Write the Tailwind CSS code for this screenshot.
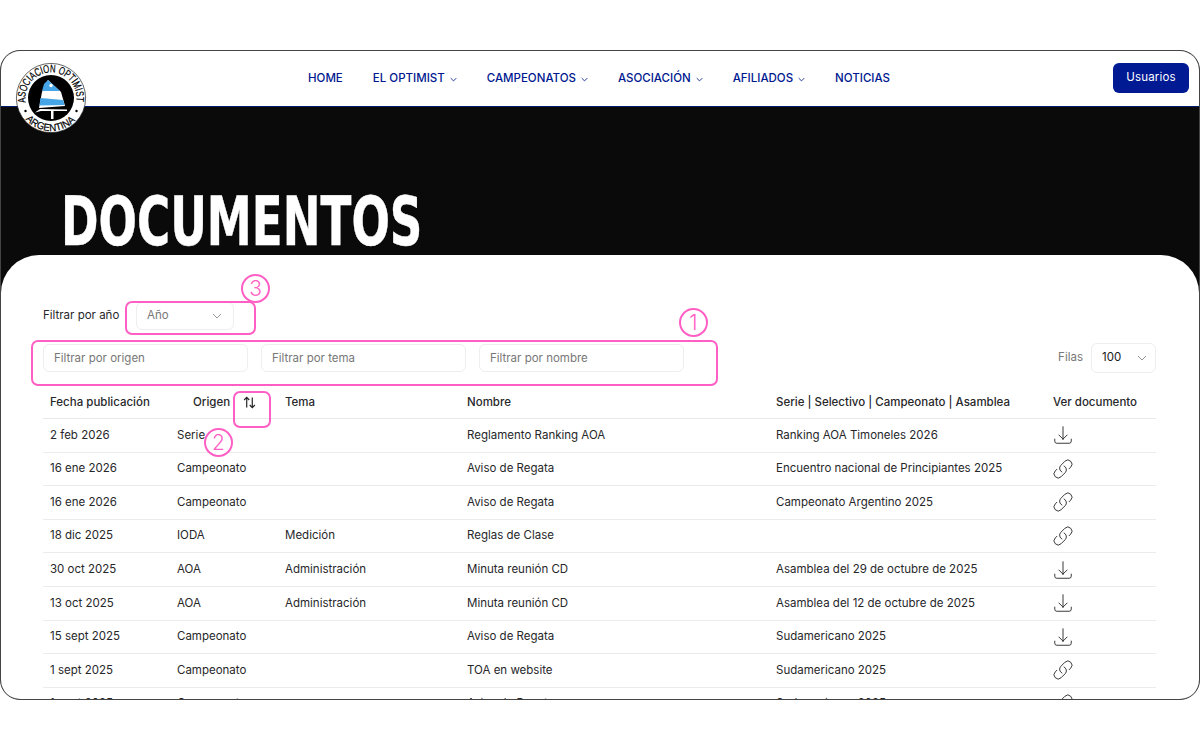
<!DOCTYPE html>
<html lang="es">
<head>
  <meta charset="UTF-8" />
  <title>Documentos</title>
  <script src="https://cdn.jsdelivr.net/npm/@tailwindcss/browser@4"></script>
</head>
<body class="bg-white h-[750px] overflow-hidden pt-[50px] font-['Inter',sans-serif] text-[#18181b]">
  <div class="relative h-[650px] border border-[#444] rounded-[20px] overflow-hidden bg-[#0a0a0a] flex flex-col">
    <!-- Nav -->
    <nav class="h-[56px] shrink-0 bg-white border-b border-[#001a6e] flex items-center pr-[10px]">
      <div class="ml-[307px] mt-[1px] flex items-center gap-[30px] text-[11.5px] font-medium text-[#00188f]">
        <a>HOME</a>
        <a class="flex items-center gap-[5px]">EL OPTIMIST <svg class="w-[7px] h-[7px]" viewBox="0 0 10 10" fill="none" stroke="currentColor" stroke-width="1.2"><path d="M1 3l4 4 4-4"/></svg></a>
        <a class="flex items-center gap-[5px]">CAMPEONATOS <svg class="w-[7px] h-[7px]" viewBox="0 0 10 10" fill="none" stroke="currentColor" stroke-width="1.2"><path d="M1 3l4 4 4-4"/></svg></a>
        <a class="flex items-center gap-[5px]">ASOCIACIÓN <svg class="w-[7px] h-[7px]" viewBox="0 0 10 10" fill="none" stroke="currentColor" stroke-width="1.2"><path d="M1 3l4 4 4-4"/></svg></a>
        <a class="flex items-center gap-[5px]">AFILIADOS <svg class="w-[7px] h-[7px]" viewBox="0 0 10 10" fill="none" stroke="currentColor" stroke-width="1.2"><path d="M1 3l4 4 4-4"/></svg></a>
        <a>NOTICIAS</a>
      </div>
      <button class="ml-auto mb-[2px] w-[76px] h-[30px] rounded-[6px] bg-[#001a94] text-white text-[11.5px] tracking-[0.15px]">Usuarios</button>
    </nav>

    <!-- Logo -->
    <svg class="absolute left-[14px] top-[11px] w-[72px] h-[72px]" viewBox="0 0 72 72">
      <defs>
        <path id="arcTop" d="M10.900 40.500 A25.500 25.500 0 1 1 61.100 40.500" />
        <path id="arcBottom" d="M10.700 57.200 A33 33 0 0 0 61.300 57.200" />
      </defs>
      <circle cx="36" cy="36" r="34.600" fill="#fff" stroke="#222" stroke-width="0.700" />
      <circle cx="36" cy="36" r="23" fill="#000" />
      <text font-family="Liberation Sans" font-size="11" stroke="#000" stroke-width="0.200" fill="#000"><textPath href="#arcTop" textLength="88" lengthAdjust="spacingAndGlyphs">ASOCIACION OPTIMIST</textPath></text>
      <text font-family="Liberation Sans" font-size="10" stroke="#000" stroke-width="0.200" fill="#000"><textPath href="#arcBottom" textLength="56" lengthAdjust="spacingAndGlyphs">ARGENTINA</textPath></text>
      <circle cx="10.500" cy="49" r="1.200" fill="#000" />
      <circle cx="61.500" cy="49" r="1.200" fill="#000" />
      <path d="M33 18 L46 30 L50 44 L24 46 L27 30 Z" fill="#fff" />
      <path d="M33 18 L45 29 L27 29 L29 22 Z" fill="#45a5e6" />
      <path d="M25.500 36 L48 38 L49.800 43 L24.500 43.500 Z" fill="#45a5e6" />
      <circle cx="36" cy="23.500" r="1.700" fill="#fff" />
      <path d="M20 50.500 L25 47 L52 47.500 L52 49 L26 49 Z" fill="#fff" />
      <rect x="36" y="48" width="2.500" height="9" fill="#fff" />
    </svg>

    <!-- Hero -->
    <div class="h-[148px] shrink-0 relative">
      <h1 class="absolute left-[60px] top-[74px] text-[68.5px] leading-[80px] font-bold font-['DejaVu_Sans',sans-serif] text-white origin-left scale-x-[0.66] whitespace-nowrap [-webkit-text-stroke:0.5px_white]">DOCUMENTOS</h1>
    </div>

    <!-- Contenido -->
    <div class="relative flex-1 bg-white rounded-t-[38px] pl-[42px] pr-[43px] pt-[46px] text-[11.5px]">
      <div class="flex items-center gap-[17px] h-[30px]">
        <span class="text-[#27272a] w-[76px] whitespace-nowrap">Filtrar por año</span>
        <div class="w-[98px] h-[28px] border border-[#eeeeee] rounded-[6px] flex items-center justify-between pl-[10px] pr-[11px] text-[#777]">
          <span>Año</span>
          <svg class="w-[10px] h-[10px]" viewBox="0 0 10 10" fill="none" stroke="#999" stroke-width="1"><path d="M1 3l4 4 4-4"/></svg>
        </div>
      </div>
      <div class="flex items-center gap-[13px] h-[30px] mt-[12px]">
        <input class="w-[205px] h-[28px] border border-[#eeeeee] rounded-[6px] px-[10px] placeholder:text-[#777]" placeholder="Filtrar por origen" />
        <input class="w-[205px] h-[28px] border border-[#eeeeee] rounded-[6px] px-[10px] placeholder:text-[#777]" placeholder="Filtrar por tema" />
        <input class="w-[205px] h-[28px] border border-[#eeeeee] rounded-[6px] px-[10px] placeholder:text-[#777]" placeholder="Filtrar por nombre" />
        <span class="ml-auto text-[#777] mr-[-5px]">Filas</span>
        <div class="w-[65px] h-[30px] border border-[#eeeeee] rounded-[6px] flex items-center justify-between pl-[10px] pr-[8px]">
          <span>100</span>
          <svg class="w-[10px] h-[10px]" viewBox="0 0 10 10" fill="none" stroke="#999" stroke-width="1"><path d="M1 3l4 4 4-4"/></svg>
        </div>
      </div>

      <!-- Tabla -->
      <div class="mt-[14px]">
        <div class="grid grid-cols-[127px_108px_182px_309px_277px_1fr] pl-[7px] h-[32px] items-center font-medium text-[#27272a] border-b border-[#e8e8e8]">
          <span>Fecha publicación</span>
          <span class="pl-[16px] flex items-center gap-[13px]">Origen
            <svg class="w-[13px] h-[13px] mt-[-1px] shrink-0" viewBox="0 0 14 14" fill="none" stroke="#27272a" stroke-width="1.3"><path d="M4 12.500V1.500M1.200 4.300L4 1.500l2.800 2.800M10 1.500v11M7.200 9.700l2.800 2.800 2.800-2.800"/></svg>
          </span>
          <span>Tema</span>
          <span>Nombre</span>
          <span class="whitespace-nowrap">Serie | Selectivo | Campeonato | Asamblea</span>
          <span class="whitespace-nowrap">Ver documento</span>
        </div>
        <div id="rows"></div>
      </div>
    </div>

    <!-- Anotaciones -->
    <div class="absolute left-[124px] top-[250px] w-[131px] h-[34px] border-2 border-[#ff5fc4] rounded-[7px]"></div>
    <div class="absolute left-[30px] top-[289px] w-[687px] h-[46px] border-2 border-[#ff5fc4] rounded-[7px]"></div>
    <div class="absolute left-[232px] top-[340px] w-[38px] h-[37px] border-2 border-[#ff5fc4] rounded-[7px]"></div>
    <div class="absolute left-[240px] top-[223px] w-[29px] h-[29px] border-2 border-[#ff5fc4] rounded-full bg-white flex items-center justify-center text-[#ff5fc4] text-[21px] font-light leading-none">3</div>
    <div class="absolute left-[678px] top-[257px] w-[29px] h-[29px] border-2 border-[#ff5fc4] rounded-full bg-white flex items-center justify-center text-[#ff5fc4] text-[21px] font-light leading-none">1</div>
    <div class="absolute left-[203px] top-[377px] w-[29px] h-[29px] border-2 border-[#ff5fc4] rounded-full bg-white flex items-center justify-center text-[#ff5fc4] text-[21px] font-light leading-none">2</div>
  </div>

  <script>
    // filas de la tabla de documentos
    const linkIcon = `<svg class="w-[22px] h-[22px] ml-[-1px] text-[#27272a]" viewBox="0 0 24 24" fill="none" stroke="currentColor" stroke-width="1" stroke-linecap="round" stroke-linejoin="round"><path d="M13.19 8.688a4.5 4.5 0 0 1 1.242 7.244l-4.5 4.5a4.5 4.5 0 0 1-6.364-6.364l1.757-1.757m13.35-.622 1.757-1.757a4.5 4.5 0 0 0-6.364-6.364l-4.5 4.5a4.5 4.5 0 0 0 1.242 7.244"/></svg>`;
    const downloadIcon = `<svg class="w-[22px] h-[22px] ml-[-1px] text-[#27272a]" viewBox="0 0 24 24" fill="none" stroke="currentColor" stroke-width="1" stroke-linecap="round" stroke-linejoin="round"><path d="M3 16.500v2.250A2.250 2.250 0 0 0 5.250 21h13.500A2.250 2.250 0 0 0 21 18.750V16.500M16.500 12 12 16.500m0 0L7.500 12m4.500 4.500V3"/></svg>`;
    const docs = [
      ['2 feb 2026', 'Serie', '', 'Reglamento Ranking AOA', 'Ranking AOA Timoneles 2026', downloadIcon],
      ['16 ene 2026', 'Campeonato', '', 'Aviso de Regata', 'Encuentro nacional de Principiantes 2025', linkIcon],
      ['16 ene 2026', 'Campeonato', '', 'Aviso de Regata', 'Campeonato Argentino 2025', linkIcon],
      ['18 dic 2025', 'IODA', 'Medición', 'Reglas de Clase', '', linkIcon],
      ['30 oct 2025', 'AOA', 'Administración', 'Minuta reunión CD', 'Asamblea del 29 de octubre de 2025', downloadIcon],
      ['13 oct 2025', 'AOA', 'Administración', 'Minuta reunión CD', 'Asamblea del 12 de octubre de 2025', downloadIcon],
      ['15 sept 2025', 'Campeonato', '', 'Aviso de Regata', 'Sudamericano 2025', downloadIcon],
      ['1 sept 2025', 'Campeonato', '', 'TOA en website', 'Sudamericano 2025', linkIcon],
      ['1 sept 2025', 'Campeonato', '', 'Aviso de Regata', 'Sudamericano 2025', linkIcon],
    ];
    document.getElementById('rows').innerHTML = docs.map(d => `
      <div class="grid grid-cols-[127px_108px_182px_309px_277px_1fr] pl-[7px] h-[33.6px] items-center text-[#27272a] border-b border-[#ececec]">
        <span>${d[0]}</span><span>${d[1]}</span><span>${d[2]}</span><span>${d[3]}</span><span class="whitespace-nowrap">${d[4]}</span><span>${d[5]}</span>
      </div>`).join('');
  </script>
</body>
</html>
